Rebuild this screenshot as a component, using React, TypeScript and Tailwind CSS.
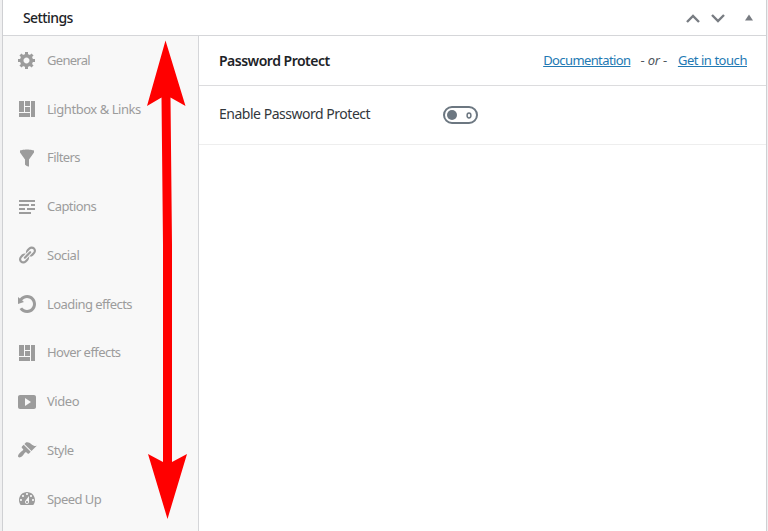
import React from 'react';

type Tab = {
  label: string;
  icon: string;
  tracking: string;
};

const LAYOUT_ICON = 'M2 2h5v11H2V2zm6 0h5v5H8V2zm6 0h4v16h-4V2zM8 8h5v5H8V8zm-6 6h11v4H2v-4z';

const tabs: Tab[] = [
  {
    label: 'General',
    tracking: 'tracking-[-0.7px]',
    icon: 'M18 12h-2.18c-.17.7-.44 1.35-.81 1.93l1.54 1.54-2.1 2.1-1.54-1.54c-.58.36-1.23.63-1.91.79V19H8v-2.18c-.68-.16-1.33-.43-1.91-.79l-1.54 1.54-2.12-2.12 1.54-1.54c-.36-.58-.63-1.23-.79-1.91H1V9.03h2.17c.16-.7.44-1.35.8-1.94L2.43 5.55l2.1-2.1 1.54 1.54c.58-.37 1.24-.64 1.93-.81V2h3v2.18c.68.16 1.33.43 1.91.79l1.54-1.54 2.12 2.12-1.54 1.54c.36.59.64 1.24.8 1.94H18V12zm-8.5 1.5c1.66 0 3-1.34 3-3s-1.34-3-3-3-3 1.34-3 3 1.34 3 3 3z',
  },
  { label: 'Lightbox & Links', tracking: 'tracking-[-0.45px]', icon: LAYOUT_ICON },
  {
    label: 'Filters',
    tracking: 'tracking-[-0.6px]',
    icon: 'M3 4.5v-2s3.34-1 7-1 7 1 7 1v2l-5 7.03v6.97s-1.22-.09-2.25-.59S8 16.5 8 16.5v-4.97z',
  },
  {
    label: 'Captions',
    tracking: 'tracking-[-0.55px]',
    icon: 'M18 3v2H2V3h16zm-6 4v2H2V7h10zm6 0v2h-4V7h4zM8 11v2H2v-2h6zm10 0v2h-8v-2h8zm-4 4v2H2v-2h12z',
  },
  {
    label: 'Social',
    tracking: 'tracking-[-0.5px]',
    icon: 'M17.74 2.76c1.68 1.69 1.68 4.41 0 6.1l-1.53 1.52c-1.12 1.12-2.7 1.47-4.14 1.09l2.62-2.61.76-.77.76-.76c.84-.84.84-2.2 0-3.04-.84-.85-2.2-.85-3.04 0l-.77.76-3.38 3.38c-.37-1.44-.02-3.02 1.1-4.14l1.52-1.53c1.69-1.68 4.42-1.68 6.1 0zM8.59 13.43l5.34-5.34c.42-.42.42-1.1 0-1.52-.44-.43-1.13-.39-1.53 0l-5.33 5.34c-.42.42-.42 1.1 0 1.52.44.43 1.13.39 1.52 0zm-.76 2.29l4.14-4.15c.38 1.44.03 3.02-1.09 4.14l-1.52 1.53c-1.69 1.68-4.41 1.68-6.1 0-1.68-1.68-1.68-4.42 0-6.1l1.53-1.52c1.12-1.12 2.7-1.47 4.14-1.1l-4.14 4.15c-.85.84-.85 2.2 0 3.05.84.84 2.2.84 3.04 0z',
  },
  {
    label: 'Loading effects',
    tracking: 'tracking-[-0.57px]',
    icon: 'M10.25 1.02c5.1 0 8.75 4.04 8.75 9s-3.65 9-8.75 9c-3.2 0-6.02-1.59-7.68-3.99l2.59-1.52c1.1 1.5 2.86 2.51 4.84 2.51 3.3 0 6-2.79 6-6s-2.7-6-6-6c-1.97 0-3.72 1-4.82 2.49L7 8.02l-6 2v-7L2.89 4.6c1.69-2.17 4.36-3.58 7.36-3.58z',
  },
  { label: 'Hover effects', tracking: 'tracking-[-0.55px]', icon: LAYOUT_ICON },
  {
    label: 'Video',
    tracking: 'tracking-[-0.45px]',
    icon: 'M19 15V5c0-1.1-.9-2-2-2H3c-1.1 0-2 .9-2 2v10c0 1.1.9 2 2 2h14c1.1 0 2-.9 2-2zM8 14V6l6 4z',
  },
  {
    label: 'Style',
    tracking: 'tracking-[-0.5px]',
    icon: 'M14.48 11.06L7.41 3.99l1.5-1.5c.5-.56 2.3-.47 3.51.32 1.21.8 1.43 1.28 2.91 2.1 1.18.64 2.45 1.26 4.45.85zm-.71.71L6.7 4.7 4.93 6.47c-.39.39-.39 1.02 0 1.41l1.06 1.06c.39.39.39 1.03 0 1.42-.6.6-1.43 1.11-2.21 1.69-.35.26-.7.53-1.01.84C1.43 14.23.4 16.08 1.4 17.07c.99 1 2.84-.03 4.18-1.36.31-.31.58-.66.85-1.02.57-.78 1.08-1.61 1.69-2.21.39-.39 1.02-.39 1.41 0l1.06 1.06c.39.39 1.02.39 1.41 0z',
  },
  {
    label: 'Speed Up',
    tracking: 'tracking-[-0.55px]',
    icon: 'M3.76 16h12.48c1.1-1.37 1.76-3.11 1.76-5 0-4.42-3.58-8-8-8s-8 3.58-8 8c0 1.89.66 3.63 1.76 5zM10 4c.55 0 1 .45 1 1s-.45 1-1 1-1-.45-1-1 .45-1 1-1zM6 6c.55 0 1 .45 1 1s-.45 1-1 1-1-.45-1-1 .45-1 1-1zm8 0c.55 0 1 .45 1 1s-.45 1-1 1-1-.45-1-1 .45-1 1-1zm-5.37 5.55L12 7v6c0 1.1-.9 2-2 2s-2-.9-2-2c0-.57.24-1.08.63-1.45zM4 10c.55 0 1 .45 1 1s-.45 1-1 1-1-.45-1-1 .45-1 1-1zm12 0c.55 0 1 .45 1 1s-.45 1-1 1-1-.45-1-1 .45-1 1-1zm-5 3c0-.55-.45-1-1-1s-1 .45-1 1 .45 1 1 1 1-.45 1-1z',
  },
];

function Header() {
  return (
    <header className="flex h-9 items-center justify-between border-b border-[#d5d6d9] pl-5 pr-[13px]">
      <h2 className="text-[14px] font-medium tracking-[-0.6px] text-[#1d2327]">Settings</h2>
      <div className="flex items-center pt-px text-[#787c82]">
        <svg className="h-[9px] w-[14px]" viewBox="0 0 14 9" fill="none" stroke="currentColor" strokeWidth="2.4">
          <path d="M1 8l6-6 6 6" />
        </svg>
        <svg className="ml-[11px] h-[9px] w-[14px]" viewBox="0 0 14 9" fill="none" stroke="currentColor" strokeWidth="2.4">
          <path d="M1 1l6 6 6-6" />
        </svg>
        <svg className="mb-px ml-5 h-[7px] w-2" viewBox="0 0 8 7" fill="currentColor">
          <path d="M4 0.5l4 6H0z" />
        </svg>
      </div>
    </header>
  );
}

function Sidebar() {
  return (
    <nav className="w-[196px] shrink-0 border-r border-[#d5d6d9] bg-[#f8f8f8]">
      {tabs.map((tab) => (
        <a key={tab.label} className="flex h-[48.75px] items-center pl-[14px] text-[#9c9c9c]">
          <svg className="h-5 w-5 shrink-0" viewBox="0 0 20 20" fill="currentColor">
            <path d={tab.icon} />
          </svg>
          <span className={`ml-[10px] whitespace-nowrap pb-px text-[13px] leading-5 ${tab.tracking}`}>{tab.label}</span>
        </a>
      ))}
    </nav>
  );
}

function Toggle() {
  return (
    <button
      type="button"
      aria-label="Enable Password Protect"
      className="flex h-[18px] w-[35px] items-center justify-between rounded-full border-2 border-[#6c7781] pl-0.5 pr-1"
    >
      <span className="h-[10px] w-[10px] rounded-full bg-[#6c7781]" />
      <svg className="h-[7px] w-[6px]" viewBox="0 0 6 7" fill="none" stroke="#6c7781" strokeWidth="1.5">
        <ellipse cx="3" cy="3.5" rx="1.9" ry="2.4" />
      </svg>
    </button>
  );
}

export default function App() {
  return (
    <div className="relative h-[531px] w-[768px] overflow-hidden bg-[#f0f0f1] pl-0.5 pr-px font-['Noto_Sans','Open_Sans',sans-serif]">
      <div className="flex h-full flex-col border-x border-[#cfd0d3] bg-white">
        <Header />
        <div className="flex min-h-0 flex-1">
          <Sidebar />
          <main className="flex-1">
            <div className="flex h-[50px] items-center justify-between border-b border-[#dcdcde] pl-5 pr-[19px]">
              <h3 className="pb-px text-[14px] font-semibold tracking-[-0.5px] text-[#1d2327]">Password Protect</h3>
              <div className="flex items-center whitespace-nowrap text-[13px] text-[#50575e]">
                <a className="tracking-[-0.6px] text-[#2279b3] underline">Documentation</a>
                <span className="ml-[10px] mr-[11px] tracking-[-0.2px]">
                  - <em>or</em> -
                </span>
                <a className="tracking-[-0.45px] text-[#2279b3] underline">Get in touch</a>
              </div>
            </div>
            <div className="flex h-[59px] items-center border-b border-[#eeeeee] pl-5">
              <span className="w-[224px] pb-[3px] text-[14px] tracking-[-0.48px] text-[#32373c]">Enable Password Protect</span>
              <Toggle />
            </div>
          </main>
        </div>
      </div>

      {/* double-headed arrow running the length of the tab list */}
      <svg className="pointer-events-none absolute inset-0 h-full w-full" viewBox="0 0 768 531" fill="#ff0000">
        <path d="M165.5 40.5L185.5 106L170.5 97.5L172 245V462L187 454L167.5 519L148 454L163 462V245L161.5 97.5L147 106z" />
      </svg>
    </div>
  );
}
